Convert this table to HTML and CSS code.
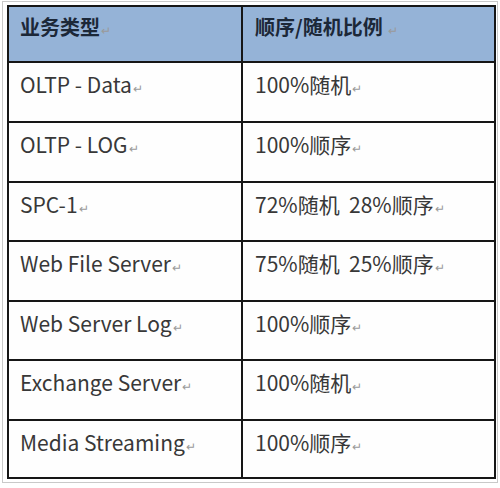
FILE: index.html
```html
<!DOCTYPE html>
<html lang="zh">
<head>
<meta charset="utf-8">
<link rel="stylesheet" href="styles.css">
</head>
<body>
<div class="frame">
  <div class="grid">
    <div class="cell head">业务类型<span class="pm">↵</span></div>
    <div class="cell head">顺序/随机比例 <span class="pm">↵</span></div>
    <div class="cell r1">OLTP - Data<span class="pm">↵</span></div>
    <div class="cell r1">100%随机<span class="pm">↵</span></div>
    <div class="cell r2">OLTP - LOG<span class="pm">↵</span></div>
    <div class="cell r2">100%顺序<span class="pm">↵</span></div>
    <div class="cell r3">SPC-1<span class="pm">↵</span></div>
    <div class="cell r3">72%随机&nbsp; 28%顺序<span class="pm">↵</span></div>
    <div class="cell r4">Web File Server<span class="pm">↵</span></div>
    <div class="cell r4">75%随机&nbsp; 25%顺序<span class="pm">↵</span></div>
    <div class="cell r5">Web Server Log<span class="pm">↵</span></div>
    <div class="cell r5">100%顺序<span class="pm">↵</span></div>
    <div class="cell r6">Exchange Server<span class="pm">↵</span></div>
    <div class="cell r6">100%随机<span class="pm">↵</span></div>
    <div class="cell r7">Media Streaming<span class="pm">↵</span></div>
    <div class="cell r7">100%顺序<span class="pm">↵</span></div>
  </div>
</div>
</body>
</html>
```
FILE: styles.css
```css
html, body {
  margin: 0;
  padding: 0;
  background: #ffffff;
}
body {
  width: 500px;
  height: 488px;
  overflow: hidden;
  font-family: "Noto Sans CJK SC", "Noto Sans", sans-serif;
}
.frame {
  box-sizing: border-box;
  margin: 1px 0 0 2px;
  width: 496px;
  height: 482px;
  border: 1px solid #c9c9c9;
  padding: 3px 0 0 4px;
}
.grid {
  box-sizing: border-box;
  width: 489px;
  height: 474px;
  display: grid;
  grid-template-columns: 232px 1fr;
  grid-template-rows: 54px 58px 58px 57px 58px 57px 58px 1fr;
  gap: 2px;
  padding: 2px;
  background: #161616;
}
.cell {
  background: #fefefe;
  color: #383838;
  font-size: 21px;
  line-height: 24px;
  padding: 9px 0 0 11px;
  white-space: nowrap;
}
.grid > .cell:nth-child(2n) {
  padding-left: 12px;
}
.cell.head {
  background: #95b3d7;
  color: #1c2838;
  font-weight: bold;
  font-size: 20px;
  padding-top: 8px;
}
.pm {
  color: #9a9a9a;
  font-size: 12px;
  font-weight: normal;
  margin-left: 1px;
}
```
